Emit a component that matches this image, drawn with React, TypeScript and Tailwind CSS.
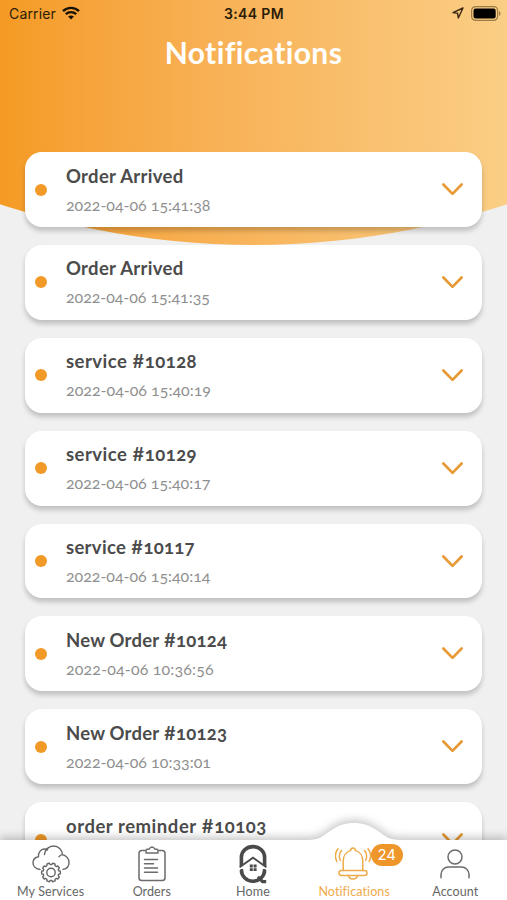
import type { ReactNode } from 'react';

type Notification = { title: string; time: string; titleTracking: string; timeTracking: string };

const notifications: Notification[] = [
  { title: 'Order Arrived', time: '2022-04-06 15:41:38', titleTracking: 'tracking-[0.32px]', timeTracking: 'tracking-[-0.03px]' },
  { title: 'Order Arrived', time: '2022-04-06 15:41:35', titleTracking: 'tracking-[0.32px]', timeTracking: 'tracking-[-0.06px]' },
  { title: 'service #10128', time: '2022-04-06 15:40:19', titleTracking: 'tracking-[0.46px]', timeTracking: 'tracking-[0px]' },
  { title: 'service #10129', time: '2022-04-06 15:40:17', titleTracking: 'tracking-[0.46px]', timeTracking: 'tracking-[-0.03px]' },
  { title: 'service #10117', time: '2022-04-06 15:40:14', titleTracking: 'tracking-[0.3px]', timeTracking: 'tracking-[-0.03px]' },
  { title: 'New Order #10124', time: '2022-04-06 10:36:56', titleTracking: 'tracking-[0.22px]', timeTracking: 'tracking-[0.15px]' },
  { title: 'New Order #10123', time: '2022-04-06 10:33:01', titleTracking: 'tracking-[0.22px]', timeTracking: 'tracking-[0px]' },
  { title: 'order reminder #10103', time: '2022-04-06 10:30:00', titleTracking: 'tracking-[0.55px]', timeTracking: 'tracking-[0px]' },
];

function StatusBar() {
  return (
    <div className="grid h-7 grid-cols-3 items-center pb-[2px] pl-[9px] pr-[6px] font-['Inter',sans-serif] text-[14px] text-[#2b1c08]">
      <div className="flex items-center gap-[6px]">
        <span className="tracking-[0.15px]">Carrier</span>
        <svg width="18" height="14" viewBox="0 0 18 14" fill="none" stroke="#1a1206" strokeWidth="2.4">
          <path d="M1 5.200C5.500.8 12.500.8 17 5.200" />
          <path d="M3.800 8.200c3-2.800 7.400-2.800 10.400 0" />
          <path d="M9 13.600 6.100 10.600c1.700-1.500 4.100-1.500 5.800 0z" fill="#1a1206" stroke="none" />
        </svg>
      </div>
      <span className="-ml-[2px] text-center font-semibold tracking-[0.35px]">3:44 PM</span>
      <div className="flex items-center justify-end gap-[7px]">
        <svg width="12" height="12" viewBox="0 0 12 12" fill="none" stroke="#3a2810" strokeWidth="1.400" strokeLinejoin="round">
          <path d="M11 1 1 5.600l4.600.700L6.300 11z" />
        </svg>
        <svg width="30" height="15" viewBox="0 0 30 15">
          <rect x=".6" y=".6" width="26" height="13.800" rx="4" fill="none" stroke="#9a7b45" strokeWidth="1.200" />
          <rect x="2.500" y="2.500" width="22.200" height="10" rx="2.200" fill="#000" />
          <path d="M28 5.200c2 .6 2 4 0 4.600z" fill="#9a7b45" />
        </svg>
      </div>
    </div>
  );
}

// the number sign stays at cap height while the digits are old style
function Title({ text }: { text: string }) {
  const [name, id] = text.split('#');
  return (
    <>
      {name}
      {id && <span className="lining-nums">#</span>}
      {id}
    </>
  );
}

function NotificationCard({ item }: { item: Notification }) {
  return (
    <li className="flex h-[74.87px] shrink-0 items-center rounded-[17px] bg-white pl-[10px] pr-[19px] shadow-[0_4px_5px_rgba(0,0,0,0.2)]">
      <span className="size-[12px] rounded-full bg-[#f19a27]" />
      <div className="ml-[19px] flex-1 whitespace-nowrap oldstyle-nums">
        <p className={`text-[18.5px] leading-[26px] font-bold text-[#4b4b4b] ${item.titleTracking}`}>
          <Title text={item.title} />
        </p>
        <p className={`mt-[4px] text-[16px] leading-[24px] text-[#8f8f8f] ${item.timeTracking}`}>{item.time}</p>
      </div>
      <svg width="21" height="13" viewBox="0 0 21 13" fill="none" stroke="#e79a35" strokeWidth="2.700" strokeLinecap="round" strokeLinejoin="round">
        <path d="m1.400 1.500 9.100 9.400 9.100-9.400" />
      </svg>
    </li>
  );
}

function ServicesIcon() {
  const teeth = Array.from({ length: 10 }, (_, i) => i * 36);
  const at = (r: number, deg: number) => {
    const a = (deg * Math.PI) / 180;
    return `${(19 + r * Math.cos(a)).toFixed(2)} ${(27.5 + r * Math.sin(a)).toFixed(2)}`;
  };
  const gear = teeth
    .map((d, i) => `${i ? 'L' : 'M'}${at(7.9, d - 13)}L${at(9.4, d - 8)}A9.4 9.4 0 0 1 ${at(9.4, d + 8)}L${at(7.9, d + 13)}`)
    .join('');

  return (
    <svg width="38" height="38" viewBox="0 0 38 38" fill="none" stroke="#666" strokeWidth="1.400" strokeLinecap="round" strokeLinejoin="round">
      <path d="M8 24.500C3.500 24 .8 21 1 17.500c.2-3 2.500-5.300 5.500-5.800C6 7.500 9 4.200 12 4c1.500-.1 2.600.3 3.600.900M12.500 9.500C13.200 4.500 16.800 1 21.500 1c5 0 8.600 3.600 8.900 8.600M27 11.700c1-1.400 2-2 3.400-2.100 3.700.8 6.600 4 6.600 7.800 0 3.600-2.400 6.400-6 7" />
      <path d={`${gear}z`} />
      <circle cx="19" cy="27.500" r="4.200" />
    </svg>
  );
}

function OrdersIcon() {
  return (
    <svg width="28" height="36" viewBox="0 0 28 36" fill="none" stroke="#6b6b6b" strokeWidth="1.500" strokeLinecap="round" strokeLinejoin="round">
      <path d="M7 4.500H3.800A2.800 2.800 0 0 0 1 7.300v24.400a2.800 2.800 0 0 0 2.800 2.800h20.400a2.800 2.800 0 0 0 2.800-2.800V7.300a2.800 2.800 0 0 0-2.800-2.800H21" />
      <path d="M8 7V4.500c0-.8.500-1.200 1.300-1.200h1.500C11.800 1.800 12.800 1 14 1s2.200.8 3.200 2.300h1.500c.8 0 1.300.4 1.300 1.200V7z" />
      <path d="M6.500 13.500h13M6.500 17.800h9M6.500 22h13M6.500 26.300h13" />
    </svg>
  );
}

function HomeIcon() {
  return (
    <svg width="28" height="40" viewBox="0 0 28 40" fill="none" stroke="#4a4a4a">
      <path d="M2.400 22v-8.700C2.400 7 7.700 2.600 14 2.600S25.600 7 25.600 13.300V22" strokeWidth="3.600" />
      <path d="M2.400 25v1c0 6.200 5.300 11.200 11.600 11.200S25.600 32.200 25.600 26v-1" strokeWidth="3.600" />
      <path d="M-1 26 14 15.200 29 26" stroke="#fff" strokeWidth="1.800" />
      <path d="M.6 23.200 14 13.700l13.400 9.500" strokeWidth="1.800" />
      <path d="m18.800 32.800 4.800 4.800h3.600" strokeWidth="3.200" />
      <path d="M10.800 20.500h3v2.900h-3zM14.600 20.500h3v2.900h-3zM10.800 24.200h3v2.900h-3zM14.600 24.200h3v2.900h-3z" fill="#4a4a4a" stroke="none" />
    </svg>
  );
}

function BellIcon() {
  return (
    <svg className="-ml-[2px]" width="36" height="33" viewBox="0 0 36 33" fill="none" stroke="#efaa4b" strokeWidth="1.500" strokeLinecap="round" strokeLinejoin="round">
      <path d="M8.200 23.500V14c0-5 2.900-9.200 7.300-10.400C15.700 2 16.500 1 18 1s2.300 1 2.500 2.600c4.400 1.200 7.300 5.400 7.300 10.400v9.500" />
      <rect x="4" y="23.500" width="28" height="5" rx="2.500" />
      <path d="M13.300 28.500c.6 2.200 2.400 3.500 4.700 3.500s4.100-1.300 4.700-3.500" />
      <path d="M3 1.800C-.1 5.500-.1 10.500 1.900 14.500M6.500 3.500c-2.400 3-2.600 6.700-1.200 10M33 1.800c3.100 3.700 3.100 8.700 1.100 12.700M29.500 3.500c2.400 3 2.600 6.700 1.200 10" />
    </svg>
  );
}

function AccountIcon() {
  return (
    <svg width="30" height="30" viewBox="0 0 30 30" fill="none" stroke="#6b6b6b" strokeWidth="1.500" strokeLinecap="round">
      <circle cx="15" cy="8" r="7" />
      <path d="M1 28.800v-3.300a7.500 7.500 0 0 1 7.500-7.500h13a7.500 7.500 0 0 1 7.500 7.500v3.300" />
    </svg>
  );
}

function Tab({ label, active, children }: { label: string; active?: boolean; children: ReactNode }) {
  return (
    <div className="relative flex w-[101.200px] flex-col items-center">
      <div className="flex h-[41px] items-center justify-center">{children}</div>
      <span className={`-mt-px text-[12.500px] leading-[18px] tracking-[0.1px] whitespace-nowrap ${active ? 'text-[#efaa4b]' : 'text-[#666]'}`}>
        {label}
      </span>
    </div>
  );
}

function TabBar() {
  return (
    <nav className="absolute inset-x-0 bottom-0 h-[60px]">
      {/* bar outline with the raised bump under the active tab */}
      <svg
        className="absolute bottom-0 left-0 drop-shadow-[0_-3px_4px_rgba(0,0,0,0.22)]"
        width="507"
        height="78"
        viewBox="0 0 507 78"
        fill="#fff"
      >
        <path d="M0 18h308c11 0 15-4 22-9 9-6 15-8 24-8s15 2 24 8c7 5 11 9 22 9h107v60H0z" />
      </svg>
      <div className="relative flex pt-[3px]">
        <Tab label="My Services"><ServicesIcon /></Tab>
        <Tab label="Orders"><OrdersIcon /></Tab>
        <Tab label="Home"><HomeIcon /></Tab>
        <Tab label="Notifications" active>
          <BellIcon />
          <span className="absolute top-px right-[2px] flex h-[22px] w-[32px] items-center justify-center rounded-full bg-[#ee962a] font-['Inter',sans-serif] text-[15px] text-white">
            24
          </span>
        </Tab>
        <Tab label="Account"><AccountIcon /></Tab>
      </div>
    </nav>
  );
}

export default function App() {
  return (
    <div className="relative h-[900px] w-[507px] overflow-hidden bg-[#f0f0f0] font-['Lato',sans-serif]">
      <div className="absolute inset-x-0 top-0 h-[245px] bg-linear-to-r from-[#f59b23] to-[#face85] [clip-path:circle(807px_at_50%_-562px)]" />
      <div className="relative flex flex-col">
        <StatusBar />
        <h1 className="h-[124.200px] pt-[4px] text-center text-[30px] leading-[40px] font-bold tracking-[0.400px] text-white">Notifications</h1>
        <ul className="flex flex-col gap-[18px] px-[25px]">
          {notifications.map((item, i) => (
            <NotificationCard key={i} item={item} />
          ))}
        </ul>
      </div>
      <TabBar />
    </div>
  );
}
